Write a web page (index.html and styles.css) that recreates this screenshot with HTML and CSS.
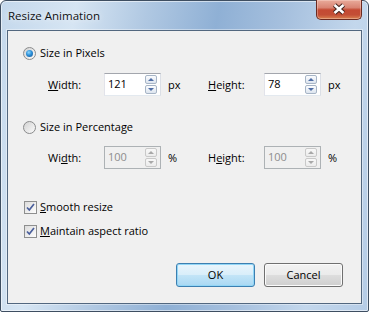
FILE: index.html
```html
<!DOCTYPE html>
<html lang="en">
    <head>
        <meta charset="UTF-8">
        <title>Resize Animation</title>
        <link rel="stylesheet" href="styles.css">
    </head>
    <body>

<div class="window">
    <div class="titlebar">
        <span class="title">Resize Animation</span>
        <div class="close-btn">
            <svg width="44" height="19" viewBox="0 0 44 19">
                <path d="M17.5 5 L26.5 13 M26.5 5 L17.5 13" stroke="#40221c" stroke-width="4.6" fill="none"/>
                <path d="M17.5 5 L26.5 13 M26.5 5 L17.5 13" stroke="#ffffff" stroke-width="2.6" fill="none"/>
            </svg>
        </div>
    </div>

    <div class="client">
        <div class="option">
            <span class="radio checked"></span>Size in Pixels
        </div>
        <div class="fields">
            <span class="field-label"><u>W</u>idth:</span>
            <div class="spin-box">
                <span class="spin-value">121</span>
                <span class="spin">
                    <span class="spin-btn up"></span>
                    <span class="spin-btn down"></span>
                </span>
            </div>
            <span class="unit">px</span>
            <span class="field-label"><u>H</u>eight:</span>
            <div class="spin-box">
                <span class="spin-value">78</span>
                <span class="spin">
                    <span class="spin-btn up"></span>
                    <span class="spin-btn down"></span>
                </span>
            </div>
            <span class="unit">px</span>
        </div>

        <div class="option option-second">
            <span class="radio"></span>Size in Percentage
        </div>
        <div class="fields fields-second">
            <span class="field-label">Wi<u>d</u>th:</span>
            <div class="spin-box disabled">
                <span class="spin-value">100</span>
                <span class="spin">
                    <span class="spin-btn up"></span>
                    <span class="spin-btn down"></span>
                </span>
            </div>
            <span class="unit">%</span>
            <span class="field-label">H<u>e</u>ight:</span>
            <div class="spin-box disabled">
                <span class="spin-value">100</span>
                <span class="spin">
                    <span class="spin-btn up"></span>
                    <span class="spin-btn down"></span>
                </span>
            </div>
            <span class="unit">%</span>
        </div>

        <div class="check-row check-first">
            <span class="checkbox">
                <svg width="11" height="11" viewBox="0 0 11 11">
                    <path d="M2 5.5 L4.3 8 L9 2" stroke="#4a5f9c" stroke-width="1.7" fill="none"/>
                </svg>
            </span><u>S</u>mooth resize
        </div>
        <div class="check-row">
            <span class="checkbox">
                <svg width="11" height="11" viewBox="0 0 11 11">
                    <path d="M2 5.5 L4.3 8 L9 2" stroke="#4a5f9c" stroke-width="1.7" fill="none"/>
                </svg>
            </span><u>M</u>aintain aspect ratio
        </div>

        <div class="buttons">
            <div class="btn btn-default">OK</div>
            <div class="btn">Cancel</div>
        </div>
    </div>
</div>

</body>
</html>
```

FILE: styles.css
```css
body {
    margin: 0;
    font-family: "Open Sans", Lato, sans-serif;
    font-size: 11px;
    color: #000;
    background-color: #fff;
}
.window {
    box-sizing: border-box;
    width: 369px;
    height: 312px;
    display: flex;
    flex-direction: column;
    padding: 0 6px 7px 6px;
    border: 1px solid #3e4e61;
    border-radius: 6px 6px 2px 2px;
    background: linear-gradient(100deg, #c4d8ec 0%, #d6e5f3 18%, #b0c8e2 35%, #8fb0d5 52%, #a6c0de 68%, #c3d7ec 85%, #b5cce6 100%);
    box-shadow: inset 0 0 0 1px rgba(255, 255, 255, 0.55);
}
.titlebar {
    height: 29px;
    display: flex;
    justify-content: space-between;
    align-items: flex-start;
    padding-left: 1px;
}
.title {
    margin-top: 8px;
    line-height: 14px;
    font-size: 11.5px;
    color: #111;
    text-shadow: 0 0 6px rgba(255, 255, 255, 0.9);
}
.close-btn {
    box-sizing: border-box;
    width: 46px;
    height: 20px;
    margin-top: -1px;
    border: 1px solid #6b2a20;
    border-top: none;
    border-radius: 0 0 5px 5px;
    background: linear-gradient(#e9ab9b 0%, #d98473 40%, #c44a33 52%, #c34e36 78%, #d9824f 100%);
    box-shadow: inset 0 0 0 1px rgba(255, 230, 220, 0.35);
}
.close-btn svg {
    display: block;
}
.client {
    flex: 1;
    box-sizing: border-box;
    padding: 14px 18px 0 15px;
    background-color: #f0f0f0;
    border: 1px solid #52677f;
    box-shadow: 0 0 0 1px rgba(255, 255, 255, 0.4);
}
.option, .check-row {
    display: flex;
    align-items: center;
    height: 16px;
    line-height: 16px;
}
.option-second {
    margin-top: 23px;
}
.radio {
    box-sizing: border-box;
    width: 13px;
    height: 13px;
    margin-right: 4px;
    border: 1px solid #8a8b8c;
    border-radius: 50%;
    background: linear-gradient(135deg, #d2d2d2, #fbfbfb);
    position: relative;
}
.radio.checked::after {
    content: "";
    position: absolute;
    left: 2px;
    top: 2px;
    width: 7px;
    height: 7px;
    border-radius: 50%;
    background: radial-gradient(circle at 40% 35%, #8fd8ff 0%, #2b8fd8 45%, #14508f 100%);
}
.fields {
    display: flex;
    align-items: center;
    margin-top: 12px;
    margin-left: 25px;
    height: 23px;
}
.fields > * {
    flex: none;
}
.fields-second {
    margin-top: 11px;
}
.field-label {
    width: 56px;
}
.unit {
    width: 40px;
    margin-left: 7px;
}
.spin-box {
    box-sizing: border-box;
    width: 57px;
    height: 23px;
    display: flex;
    align-items: center;
    background-color: #fff;
    border: 1px solid #abadb3;
    border-top-color: #a3a6ad;
    border-right-color: #dbdfe6;
    border-bottom-color: #e3e9ef;
    border-left-color: #e2e3ea;
}
.spin-value {
    flex: 1;
    padding-left: 3px;
    margin-top: -2px;
}
.spin {
    display: flex;
    flex-direction: column;
    gap: 1px;
    margin-right: 3px;
}
.spin-btn {
    box-sizing: border-box;
    width: 12px;
    height: 9px;
    border: 1px solid #a7b5c6;
    border-radius: 2px;
    background: linear-gradient(#fbfcfe, #dde5ef);
    display: flex;
    align-items: center;
    justify-content: center;
}
.spin-btn.up::after {
    content: "";
    border-left: 3px solid transparent;
    border-right: 3px solid transparent;
    border-bottom: 3px solid #4f6ea5;
}
.spin-btn.down::after {
    content: "";
    border-left: 3px solid transparent;
    border-right: 3px solid transparent;
    border-top: 3px solid #4f6ea5;
}
.spin-box.disabled {
    background-color: #f0f0f0;
    border-color: #adb2b5;
}
.spin-box.disabled .spin-value {
    color: #8d8d8d;
}
.spin-box.disabled .spin-btn {
    border-color: #c9c9c9;
    background: linear-gradient(#f8f8f8, #ececec);
}
.spin-box.disabled .spin-btn.up::after {
    border-bottom-color: #a8a8a8;
}
.spin-box.disabled .spin-btn.down::after {
    border-top-color: #a8a8a8;
}
.check-first {
    margin-top: 30px;
}
.check-row + .check-row {
    margin-top: 8px;
}
.check-row {
    padding-left: 1px;
}
.checkbox {
    box-sizing: border-box;
    width: 13px;
    height: 13px;
    margin-right: 3px;
    border: 1px solid #8e8f8f;
    background: linear-gradient(135deg, #dcdcdc, #fdfdfd);
    display: flex;
    align-items: center;
    justify-content: center;
}
.checkbox svg {
    display: block;
}
.buttons {
    display: flex;
    justify-content: flex-end;
    gap: 9px;
    margin-top: 24px;
}
.btn {
    box-sizing: border-box;
    width: 79px;
    height: 24px;
    line-height: 22px;
    text-align: center;
    border: 1px solid #707070;
    border-radius: 3px;
    background: linear-gradient(#f2f2f2 0%, #ebebeb 48%, #dddddd 52%, #cfcfcf 100%);
    box-shadow: inset 0 0 0 1px #fbfbfb;
}
.btn-default {
    border-color: #3c7fb1;
    background: linear-gradient(#e9f5fc 0%, #d9eefa 48%, #c2e4f7 52%, #a9d8f3 100%);
    box-shadow: inset 0 0 0 1px #92d6f6;
}
```
